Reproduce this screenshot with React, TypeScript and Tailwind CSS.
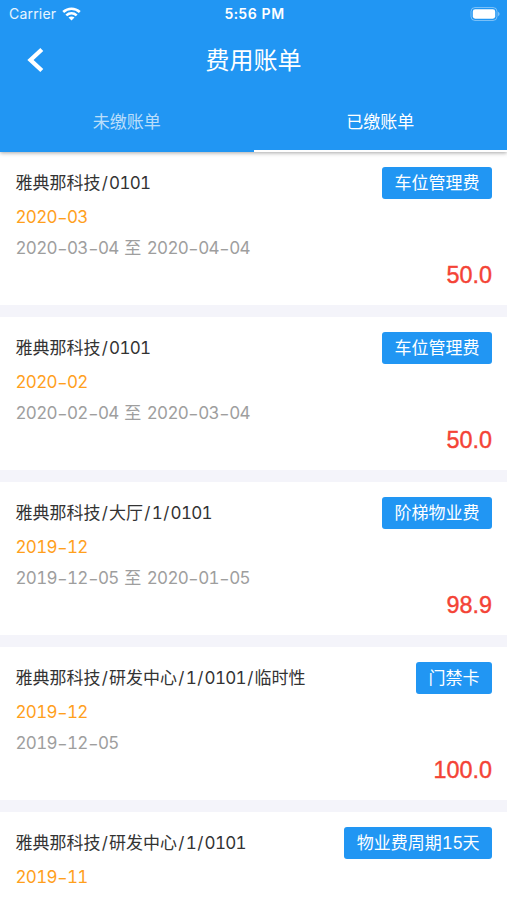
import React, { useState } from "react";

interface Bill {
  id: number;
  house: string;
  month: string;
  period?: string;
  type: string;
  amount?: string;
}

const bills: Bill[] = [
  { id: 1, house: "雅典那科技/0101", month: "2020-03", period: "2020-03-04 至 2020-04-04", type: "车位管理费", amount: "50.0" },
  { id: 2, house: "雅典那科技/0101", month: "2020-02", period: "2020-02-04 至 2020-03-04", type: "车位管理费", amount: "50.0" },
  { id: 3, house: "雅典那科技/大厅/1/0101", month: "2019-12", period: "2019-12-05 至 2020-01-05", type: "阶梯物业费", amount: "98.9" },
  { id: 4, house: "雅典那科技/研发中心/1/0101/临时性", month: "2019-12", period: "2019-12-05", type: "门禁卡", amount: "100.0" },
  { id: 5, house: "雅典那科技/研发中心/1/0101", month: "2019-11", type: "物业费周期15天" },
];

const tabs = ["未缴账单", "已缴账单"];

// digits are set a little tighter, dashes and slashes a little wider
function MixedText({ value }: { value: string }) {
  return (
    <>
      {value.split(/([-/]|\d+)/).map((part, i) => {
        if (part === "-") {
          return <span key={i} className="ml-[-0.2px] mr-[-0.6px] inline-block translate-y-px scale-x-130">-</span>
        }
        if (part === "/") {
          return <span key={i} className="inline-block w-[8.6px] text-center">/</span>
        }
        if (/\d/.test(part)) {
          return <span key={i} className="tracking-[-0.7px]">{part}</span>
        }
        return part
      })}
    </>
  );
}

function StatusBar() {
  return (
    <div className="grid h-[27px] grid-cols-3 items-center pl-[9px] pr-[7px] font-['Inter'] text-[14px]">
      <div className="flex items-center gap-[6px] text-white/90">
        <span className="tracking-[0.2px]">Carrier</span>
        <svg width="19" height="14" viewBox="0 0 19 14" fill="none" stroke="white" strokeWidth="2.6">
          <path d="M1.2 5C6 .6 13 .6 17.8 5" />
          <path d="M4.3 8.4C7.4 5.6 11.6 5.6 14.7 8.4" />
          <path d="M9.5 13.6L6.5 10.6C8.3 9.1 10.7 9.1 12.5 10.6Z" fill="white" stroke="none" />
        </svg>
      </div>
      <span className="text-center font-semibold tracking-[0.5px]">5:56 PM</span>
      <svg className="justify-self-end" width="30" height="14" viewBox="0 0 30 14">
        <rect x="1" y=".5" width="26" height="13" rx="4" fill="none" stroke="white" strokeOpacity=".4" />
        <rect x="2.8" y="2.3" width="22.4" height="9.4" rx="2.4" fill="white" />
        <path d="M28.2 4.8c1.8.7 1.8 3.7 0 4.4z" fill="white" fillOpacity=".5" />
      </svg>
    </div>
  );
}

function BillCard({ bill }: { bill: Bill }) {
  return (
    <div className="h-[153px] shrink-0 bg-white px-[15px] pt-[15px]">
      <div className="flex h-8 items-center justify-between">
        <span className="pt-[2px] pl-[0.5px] text-[17px] text-[#333]">
          <MixedText value={bill.house} />
        </span>
        <span className="flex h-8 items-center rounded-[3px] bg-[#2196f3] px-[12.5px] pt-[2px] text-[17px] text-white">
          <span><MixedText value={bill.type} /></span>
        </span>
      </div>
      <div className="mt-[5px] h-[26px] pl-[0.5px] text-[17px] leading-[26px] text-[#ffa01c]">
        <MixedText value={bill.month} />
      </div>
      {bill.period && (
        <div className="mt-[5px] h-[26px] pl-[0.5px] text-[17px] leading-[26px] text-[#9e9e9e] [word-spacing:1px]">
          <MixedText value={bill.period} />
        </div>
      )}
      {bill.amount && (
        <div className="mt-px h-[26px] text-right font-['Liberation_Sans'] text-[23.4px] leading-[26px] text-[#f44336] [-webkit-text-stroke:0.4px_#f44336]">
          {bill.amount}
        </div>
      )}
    </div>
  );
}

export default function App() {
  const [active, setActive] = useState(1);

  return (
    <div className="flex h-[900px] w-[507px] flex-col overflow-hidden bg-[#f4f4fa] font-['Inter','Noto_Sans_CJK_SC',sans-serif] tabular-nums">
      <header className="relative z-10 h-[152px] shrink-0 bg-[#2196f3] text-white shadow-[0_1px_4px_rgba(0,0,0,0.35)]">
        <StatusBar />
        <div className="grid h-[65px] grid-cols-[80px_1fr_80px] items-center">
          <button className="pl-[27px]">
            <svg width="18" height="26" viewBox="0 0 18 26" fill="none" stroke="white" strokeWidth="4.3">
              <path d="M14.8 2.5L3.5 13L14.8 23.5" />
            </svg>
          </button>
          <h1 className="pt-[2px] text-center text-[24px]">费用账单</h1>
        </div>
        <div className="grid h-[60px] grid-cols-2">
          {tabs.map((tab, i) => (
            <button
              key={tab}
              onClick={() => setActive(i)}
              className={
                i === active
                  ? "border-b-2 border-white pt-[3px] text-[17px] text-white"
                  : "border-b-2 border-transparent pt-[3px] text-[17px] text-white/70"
              }
            >
              {tab}
            </button>
          ))}
        </div>
      </header>
      <main className="flex flex-col gap-3">
        {bills.map((bill) => (
          <BillCard key={bill.id} bill={bill} />
        ))}
      </main>
    </div>
  );
}
